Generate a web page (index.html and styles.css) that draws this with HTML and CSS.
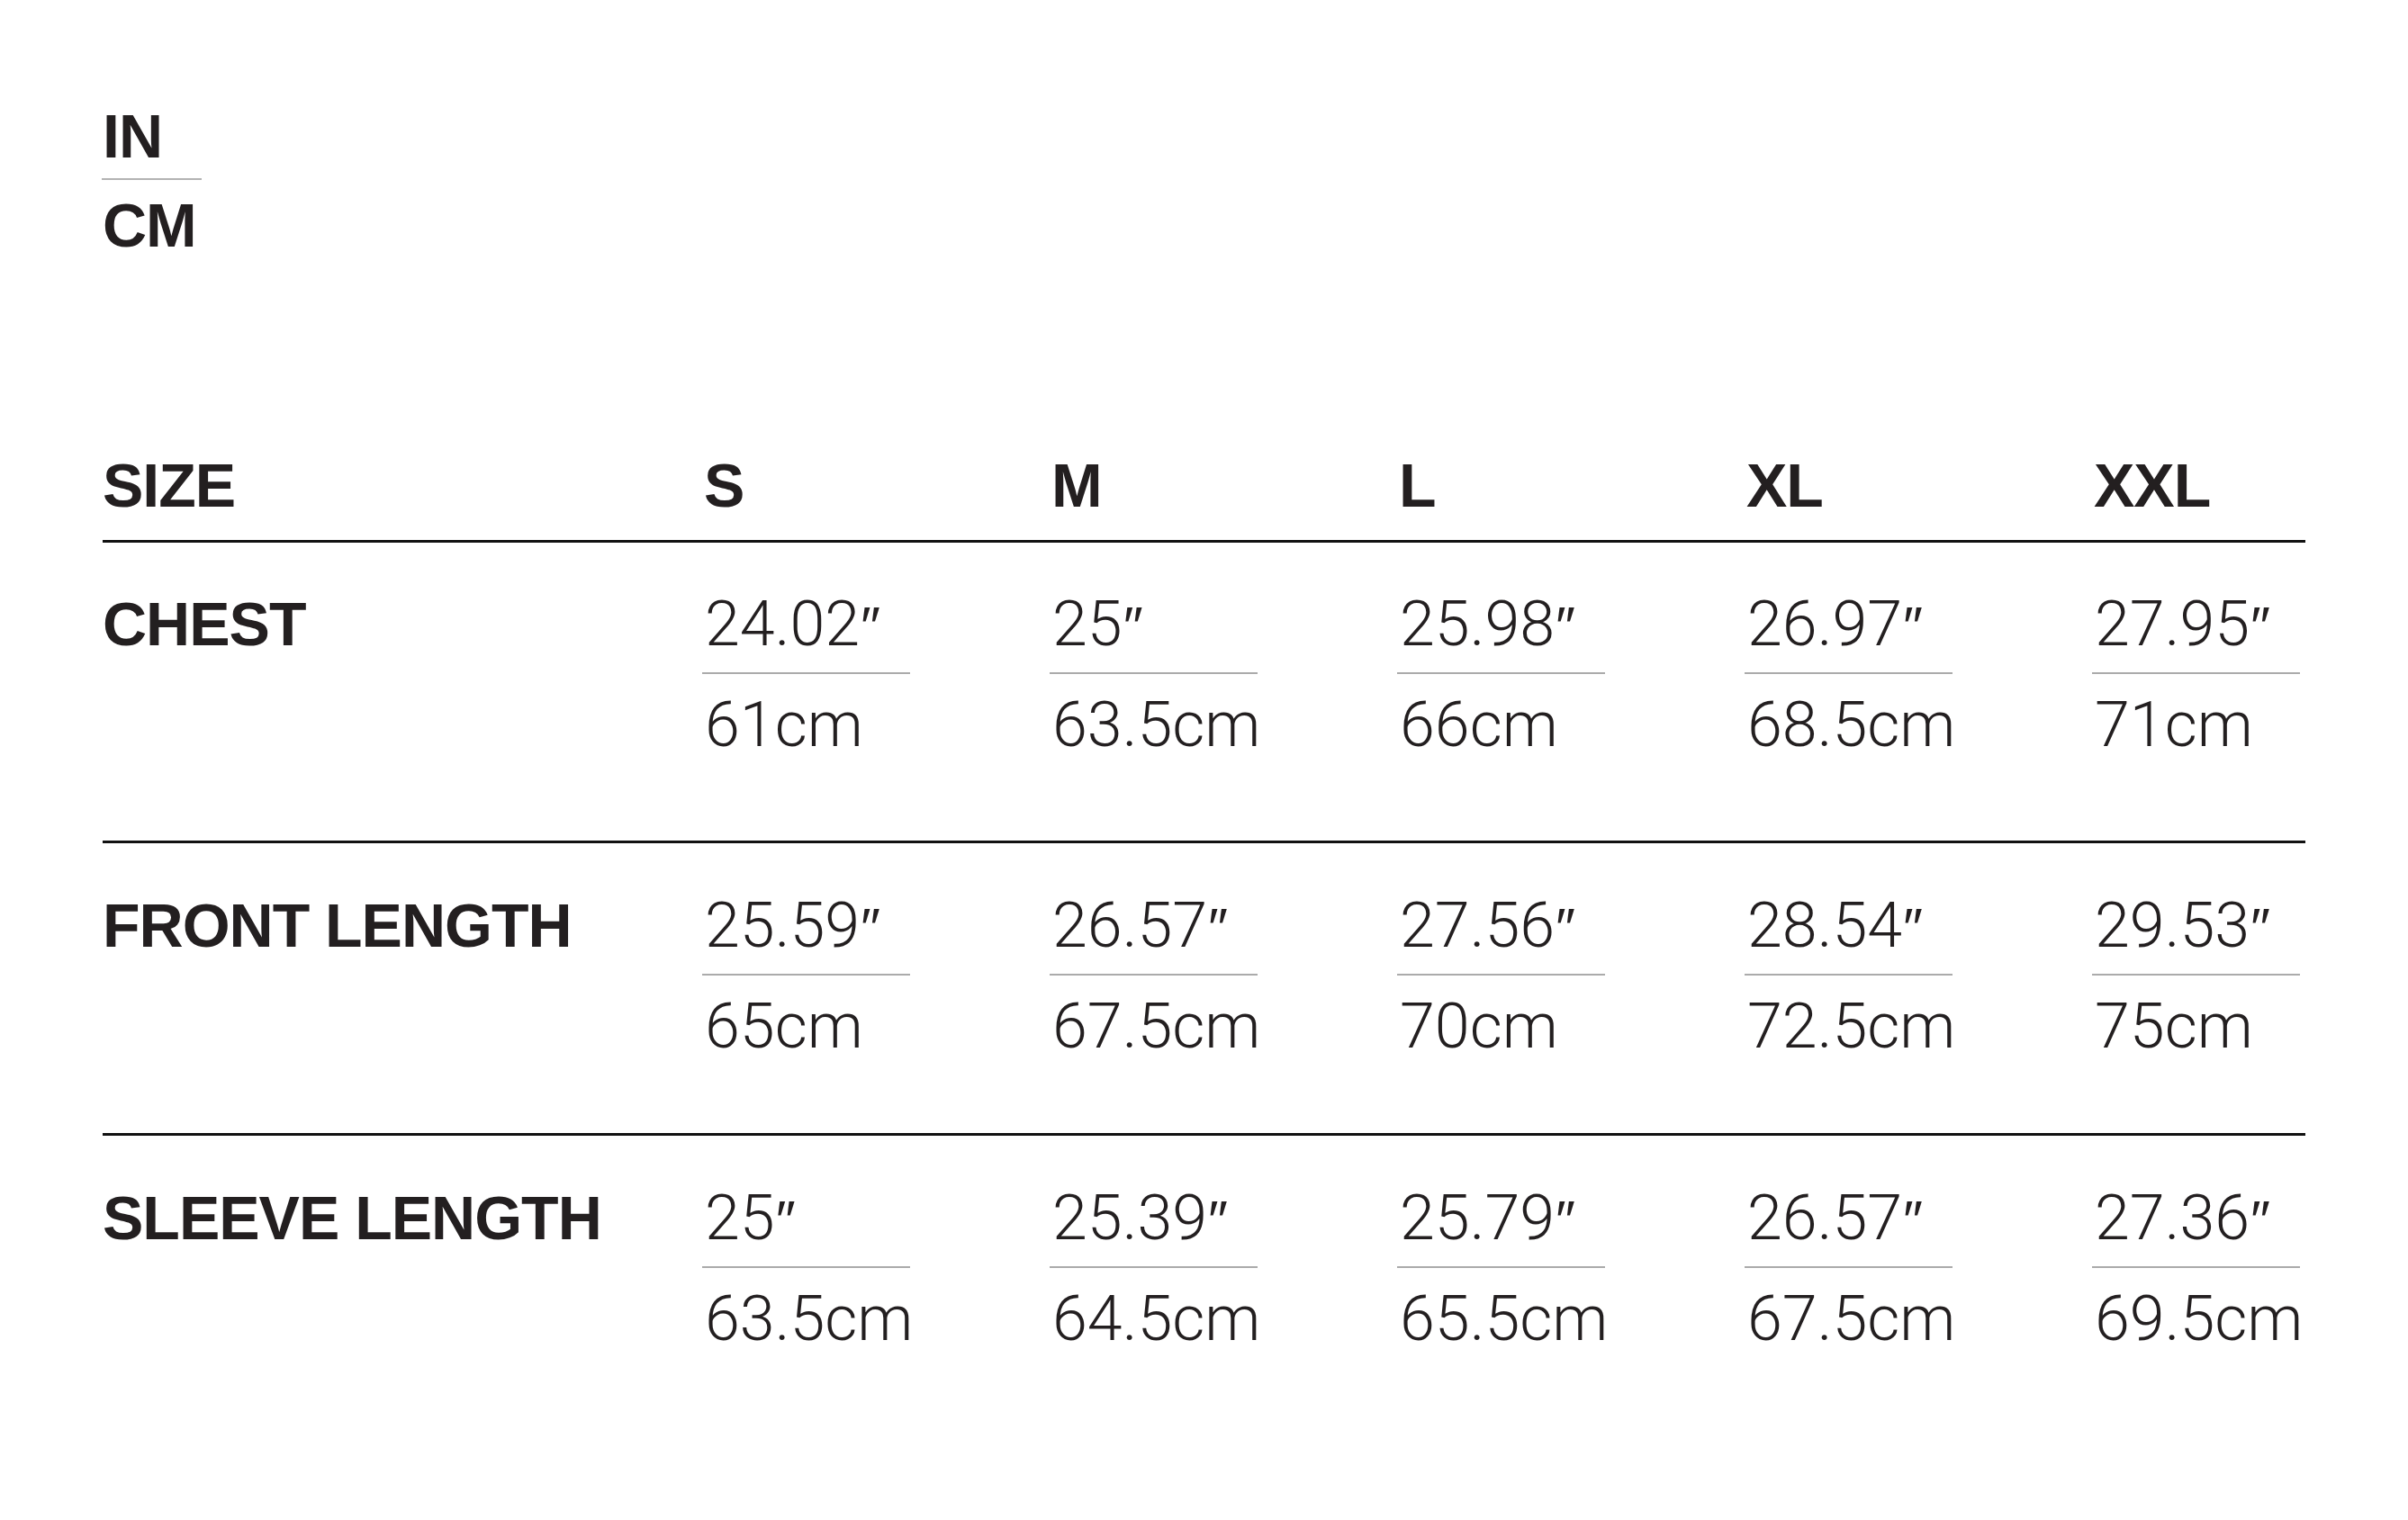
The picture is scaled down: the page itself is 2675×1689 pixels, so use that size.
FILE: index.html
```html
<!DOCTYPE html>
<html lang="en">
<head>
<meta charset="utf-8">
<title>Size chart</title>
<link rel="stylesheet" href="styles.css">
</head>
<body>
<main class="page">
  <div class="units">
    <div class="unit">IN</div>
    <div class="unit-sep"></div>
    <div class="unit">CM</div>
  </div>

  <section class="chart">
    <div class="row head">
      <div class="label">SIZE</div>
      <div class="size">S</div>
      <div class="size">M</div>
      <div class="size">L</div>
      <div class="size">XL</div>
      <div class="size">XXL</div>
    </div>

    <div class="row first">
      <div class="label">CHEST</div>
      <div class="cell"><div class="in">24.02<span class="q">″</span></div><div class="cm">61cm</div></div>
      <div class="cell"><div class="in">25<span class="q">″</span></div><div class="cm">63.5cm</div></div>
      <div class="cell"><div class="in">25.98<span class="q">″</span></div><div class="cm">66cm</div></div>
      <div class="cell"><div class="in">26.97<span class="q">″</span></div><div class="cm">68.5cm</div></div>
      <div class="cell"><div class="in">27.95<span class="q">″</span></div><div class="cm">71cm</div></div>
    </div>

    <div class="row">
      <div class="label">FRONT LENGTH</div>
      <div class="cell"><div class="in">25.59<span class="q">″</span></div><div class="cm">65cm</div></div>
      <div class="cell"><div class="in">26.57<span class="q">″</span></div><div class="cm">67.5cm</div></div>
      <div class="cell"><div class="in">27.56<span class="q">″</span></div><div class="cm">70cm</div></div>
      <div class="cell"><div class="in">28.54<span class="q">″</span></div><div class="cm">72.5cm</div></div>
      <div class="cell"><div class="in">29.53<span class="q">″</span></div><div class="cm">75cm</div></div>
    </div>

    <div class="row">
      <div class="label">SLEEVE LENGTH</div>
      <div class="cell"><div class="in">25<span class="q">″</span></div><div class="cm">63.5cm</div></div>
      <div class="cell"><div class="in">25.39<span class="q">″</span></div><div class="cm">64.5cm</div></div>
      <div class="cell"><div class="in">25.79<span class="q">″</span></div><div class="cm">65.5cm</div></div>
      <div class="cell"><div class="in">26.57<span class="q">″</span></div><div class="cm">67.5cm</div></div>
      <div class="cell"><div class="in">27.36<span class="q">″</span></div><div class="cm">69.5cm</div></div>
    </div>
  </section>
</main>
</body>
</html>
```

FILE: styles.css
```css
html, body {
  margin: 0;
  padding: 0;
  background: #ffffff;
}

.page {
  padding: 116px 114px 0 114px;
  color: #231f20;
  font-family: "Liberation Sans", Arial, sans-serif;
}

.units {
  display: flex;
  flex-direction: column;
  align-items: flex-start;
}

.unit {
  font-weight: 700;
  font-size: 68px;
  line-height: 70px;
  letter-spacing: -1px;
}

.unit-sep {
  width: 111px;
  height: 2px;
  background: #b3b3b3;
  margin: 12px 0 15px -1px;
}

.chart {
  margin-top: 219px;
  width: 2447px;
}

.row {
  display: grid;
  grid-template-columns: 666px 386px 386px 386px 386px 1fr;
  align-items: start;
  border-top: 3px solid #111;
  padding: 56px 0 84px 0;
}

.row.first {
  padding-top: 55px;
  padding-bottom: 94px;
}

.row.head {
  border-top: none;
  padding: 0 0 26px 0;
}

.label,
.size {
  font-weight: 700;
  font-size: 68px;
  line-height: 70px;
  letter-spacing: -1px;
  white-space: nowrap;
}

.size {
  padding-left: 2px;
}

.cell {
  width: 231px;
  font-family: Roboto, "Liberation Sans", Arial, sans-serif;
  font-weight: 300;
  font-size: 70px;
  line-height: 70px;
  white-space: nowrap;
}

.in {
  height: 70px;
  padding-left: 3px;
  padding-bottom: 19px;
  border-bottom: 2px solid #ababab;
}

.q {
  font-family: "DejaVu Sans", "Liberation Sans", sans-serif;
  font-weight: 200;
  font-size: 62px;
  line-height: 0;
  margin-left: 1px;
}

.cm {
  padding-left: 3px;
  padding-top: 21px;
}
```
